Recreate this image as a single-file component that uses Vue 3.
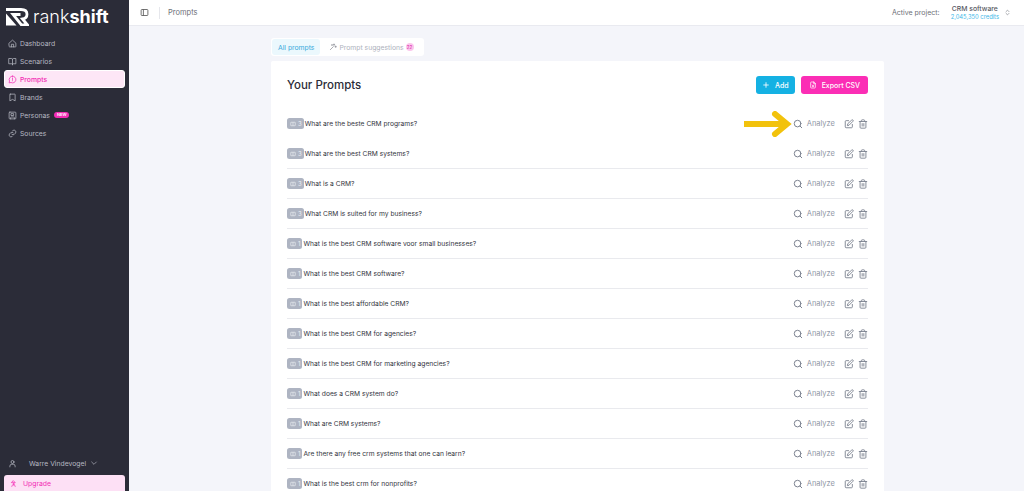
<template>
  <div class="app">
    <aside class="sidebar">
      <div class="logo">
        <svg class="logo__mark" width="24" height="18" viewBox="0 0 24 18">
          <path d="M1 1.500H16C20 1.500 22 3.500 22 6.200C22 8.800 20 10.600 17.500 11L22.500 17H16.500L8 6.500H15.500" fill="none" stroke="#fff" stroke-width="2.800" />
          <path d="M1 5.500L11.500 17.500H1Z" fill="#fff" />
        </svg>
        <span class="logo__text">rank<b>shift</b></span>
      </div>
      <nav class="nav">
        <a v-for="item in navItems" :key="item.label" class="nav__item" :class="{ 'nav__item--active': item.active }">
          <svg class="nav__icon" viewBox="0 0 24 24" fill="none" stroke="currentColor" stroke-width="2" stroke-linecap="round" stroke-linejoin="round">
            <path :d="item.icon" />
          </svg>
          <span>{{ item.label }}</span>
          <span v-if="item.badge" class="nav__badge">{{ item.badge }}</span>
        </a>
      </nav>
      <div class="sidebar__bottom">
        <div class="user">
          <svg class="user__icon" viewBox="0 0 24 24" fill="none" stroke="currentColor" stroke-width="2" stroke-linecap="round">
            <circle cx="12" cy="8" r="4" />
            <path d="M5 21v-2a5 5 0 0 1 5-5h4a5 5 0 0 1 5 5v2" />
          </svg>
          <span class="user__name">Warre Vindevogel</span>
          <svg class="user__chevron" viewBox="0 0 24 24" fill="none" stroke="currentColor" stroke-width="2" stroke-linecap="round">
            <path d="M5 9l7 7 7-7" />
          </svg>
        </div>
        <div class="upgrade">
          <svg class="upgrade__icon" viewBox="0 0 24 24" fill="none" stroke="currentColor" stroke-width="2.5" stroke-linecap="round" stroke-linejoin="round">
            <path d="M12 3l6 6H6z" />
            <circle cx="12" cy="14" r="2" />
            <path d="M6 22c0-4 3-5 6-5s6 1 6 5" />
          </svg>
          <span>Upgrade</span>
        </div>
      </div>
    </aside>

    <div class="page">
      <header class="topbar">
        <svg class="topbar__toggle" viewBox="0 0 24 24" fill="none" stroke="currentColor" stroke-width="2.2" stroke-linejoin="round">
          <rect x="3" y="4" width="18" height="16" rx="2" />
          <path d="M9 4v16" />
        </svg>
        <span class="topbar__sep"></span>
        <span class="topbar__title">Prompts</span>
        <div class="project">
          <span class="project__label">Active project:</span>
          <div class="project__info">
            <span class="project__name">CRM software</span>
            <span class="project__credits">2,045,350 credits</span>
          </div>
          <svg class="project__arrows" viewBox="0 0 24 24" fill="none" stroke="currentColor" stroke-width="2.5" stroke-linecap="round" stroke-linejoin="round">
            <path d="M7 9l5-5 5 5M7 15l5 5 5-5" />
          </svg>
        </div>
      </header>

      <main class="content">
        <div class="tabs">
          <span class="tab tab--active">All prompts</span>
          <span class="tab">
            <svg class="tab__icon" viewBox="0 0 24 24" fill="none" stroke="currentColor" stroke-width="2.2" stroke-linecap="round" stroke-linejoin="round">
              <path d="M4 20l9-9M15 3v4M13 5h4M20 9v4M18 11h4M9 5v2M8 6h2" />
            </svg>
            <span>Prompt suggestions</span>
            <span class="tab__count">22</span>
          </span>
        </div>

        <section class="card">
          <div class="card__head">
            <h1 class="card__title">Your Prompts</h1>
            <div class="card__actions">
              <button class="btn btn--blue">
                <svg class="btn__icon" viewBox="0 0 24 24" fill="none" stroke="currentColor" stroke-width="2.5" stroke-linecap="round">
                  <path d="M12 5v14M5 12h14" />
                </svg>
                Add
              </button>
              <button class="btn btn--pink">
                <svg class="btn__icon" viewBox="0 0 24 24" fill="none" stroke="currentColor" stroke-width="2.2" stroke-linecap="round" stroke-linejoin="round">
                  <path d="M14 3H7a2 2 0 0 0-2 2v14a2 2 0 0 0 2 2h10a2 2 0 0 0 2-2V8z" />
                  <path d="M14 3v5h5M10 12l4 5M14 12l-4 5" />
                </svg>
                Export CSV
              </button>
            </div>
          </div>

          <ul class="prompts">
            <li v-for="(prompt, i) in prompts" :key="i" class="prompt">
              <span class="prompt__tag">
                <svg class="prompt__tag-icon" viewBox="0 0 24 24" fill="none" stroke="currentColor" stroke-width="2.5">
                  <rect x="3" y="5" width="18" height="14" rx="1" />
                  <path d="M12 5v14" />
                </svg>
                {{ prompt.count }}
              </span>
              <span class="prompt__text">{{ prompt.text }}</span>
              <span class="prompt__analyze">
                <svg class="prompt__search" viewBox="0 0 24 24" fill="none" stroke="currentColor" stroke-width="2.4" stroke-linecap="round">
                  <circle cx="11" cy="11" r="8" />
                  <path d="M21 21l-4.300-4.300" />
                </svg>
                Analyze
              </span>
              <svg class="prompt__action" viewBox="0 0 24 24" fill="none" stroke="currentColor" stroke-width="2.2" stroke-linecap="round" stroke-linejoin="round">
                <path d="M11 4H5a2 2 0 0 0-2 2v13a2 2 0 0 0 2 2h13a2 2 0 0 0 2-2v-6" />
                <path d="M18.500 2.500a2.100 2.100 0 0 1 3 3L12 15l-4 1 1-4z" />
              </svg>
              <svg class="prompt__action" viewBox="0 0 24 24" fill="none" stroke="currentColor" stroke-width="2.2" stroke-linecap="round" stroke-linejoin="round">
                <path d="M3 6h18M8 6V4a2 2 0 0 1 2-2h4a2 2 0 0 1 2 2v2M19 6v14a2 2 0 0 1-2 2H7a2 2 0 0 1-2-2V6M10 11v6M14 11v6" />
              </svg>
              <svg v-if="i === 0" class="prompt__arrow" viewBox="0 0 48 26" fill="none" stroke="#f2c20c" stroke-width="6" stroke-linecap="round" stroke-linejoin="miter">
                <path d="M1 13H42M31 3l12 10-12 10" />
              </svg>
            </li>
          </ul>
        </section>
      </main>
    </div>
  </div>
</template>

<script setup>
const navItems = [
  { label: 'Dashboard', icon: 'M3 11l9-8 9 8v9a1 1 0 0 1-1 1H4a1 1 0 0 1-1-1zM9 21v-7h6v7' },
  { label: 'Scenarios', icon: 'M12 7v14M3 4h6a3 3 0 0 1 3 3 3 3 0 0 1 3-3h6v14h-7a2 2 0 0 0-2 2 2 2 0 0 0-2-2H3z' },
  { label: 'Prompts', active: true, icon: 'M12 3a9 9 0 1 1-4 17l-5 1 1-5A9 9 0 0 1 12 3zM12 8v4M12 15v.5' },
  { label: 'Brands', icon: 'M6 3h12a1 1 0 0 1 1 1v17l-7-4-7 4V4a1 1 0 0 1 1-1z' },
  { label: 'Personas', badge: 'NEW', icon: 'M5 3h14a2 2 0 0 1 2 2v14a2 2 0 0 1-2 2H5a2 2 0 0 1-2-2V5a2 2 0 0 1 2-2zM9 7h6v5H9zM7 21v-3a2 2 0 0 1 2-2h6a2 2 0 0 1 2 2v3' },
  { label: 'Sources', icon: 'M10 14a5 5 0 0 0 7 0l3-3a5 5 0 0 0-7-7l-1 1M14 10a5 5 0 0 0-7 0l-3 3a5 5 0 0 0 7 7l1-1' }
]

const prompts = [
  { count: 3, text: 'What are the beste CRM programs?' },
  { count: 3, text: 'What are the best CRM systems?' },
  { count: 3, text: 'What is a CRM?' },
  { count: 3, text: 'What CRM is suited for my business?' },
  { count: 1, text: 'What is the best CRM software voor small businesses?' },
  { count: 1, text: 'What is the best CRM software?' },
  { count: 1, text: 'What is the best affordable CRM?' },
  { count: 1, text: 'What is the best CRM for agencies?' },
  { count: 1, text: 'What is the best CRM for marketing agencies?' },
  { count: 1, text: 'What does a CRM system do?' },
  { count: 1, text: 'What are CRM systems?' },
  { count: 1, text: 'Are there any free crm systems that one can learn?' },
  { count: 1, text: 'What is the best crm for nonprofits?' }
]
</script>

<style>
html,
body {
  margin: 0;
  height: 100%;
  overflow: hidden;
  background: #f4f5fa;
}
</style>

<style scoped>
.app {
  display: flex;
  width: 1024px;
  height: 491px;
  overflow: hidden;
  font-family: Inter, "Noto Sans", sans-serif;
  color: #33343d;
}

/* sidebar */
.sidebar {
  width: 129px;
  flex-shrink: 0;
  display: flex;
  flex-direction: column;
  background: #2b2c38;
  color: #b6b8c2;
  box-sizing: border-box;
}

.logo {
  height: 34px;
  display: flex;
  align-items: center;
  gap: 4px;
  padding: 0 0 0 5px;
  color: #fff;
}

.logo__mark {
  flex-shrink: 0;
}

.logo__text {
  font-size: 18px;
  font-weight: 300;
  line-height: 1;
}

.logo__text b {
  font-weight: 700;
}

.nav {
  display: flex;
  flex-direction: column;
  padding: 0 4px;
}

.nav__item {
  height: 18px;
  display: flex;
  align-items: center;
  gap: 3px;
  padding: 0 4px;
  font-size: 6.8px;
  box-sizing: border-box;
}

.nav__item--active {
  background: #fde6f6;
  color: #f22cb4;
  border: 1px solid #fff;
  border-radius: 3px;
  font-weight: 500;
  padding: 0 3px;
}

.nav__icon {
  width: 9px;
  height: 9px;
  flex-shrink: 0;
}

.nav__badge {
  background: #f22cb4;
  color: #fff;
  font-size: 4px;
  font-weight: 600;
  padding: 1px 3px;
  border-radius: 4px;
  line-height: 4px;
  margin-left: 1px;
}

.sidebar__bottom {
  margin-top: auto;
}

.user {
  height: 20px;
  display: flex;
  align-items: center;
  padding: 0 0 0 8px;
  font-size: 6.8px;
  margin-bottom: 2px;
}

.user__icon {
  width: 9px;
  height: 9px;
  flex-shrink: 0;
}

.user__name {
  margin-left: 12px;
}

.user__chevron {
  width: 8px;
  height: 8px;
  margin-left: 4px;
}

.upgrade {
  height: 16px;
  margin: 0 4px;
  display: flex;
  align-items: center;
  gap: 6px;
  padding: 0 6px;
  background: #fde0f5;
  color: #f22cb4;
  border-radius: 3px 3px 0 0;
  font-size: 6.8px;
}

.upgrade__icon {
  width: 7px;
  height: 7px;
}

/* top bar */
.page {
  flex: 1;
  min-width: 0;
  display: flex;
  flex-direction: column;
  background: #f4f5fa;
}

.topbar {
  height: 25px;
  flex-shrink: 0;
  display: flex;
  align-items: center;
  padding: 0 13px 0 11px;
  background: #fff;
  border-bottom: 1px solid #e9eaf0;
}

.topbar__toggle {
  width: 9px;
  height: 9px;
  color: #555;
}

.topbar__sep {
  width: 1px;
  height: 12px;
  background: #e6e7ec;
  margin: 0 8px 0 10px;
}

.topbar__title {
  font-size: 7.5px;
  color: #6d6f78;
}

.project {
  margin-left: auto;
  display: flex;
  align-items: center;
}

.project__label {
  font-size: 7px;
  color: #6d6f78;
}

.project__info {
  display: flex;
  flex-direction: column;
  align-items: center;
  margin: 0 5px 0 11px;
}

.project__name {
  font-size: 6.8px;
  line-height: 9px;
  font-weight: 500;
  color: #555761;
}

.project__credits {
  font-size: 5.8px;
  line-height: 8px;
  color: #3db8e8;
}

.project__arrows {
  width: 7px;
  height: 7px;
  color: #8a8c94;
}

/* content */
.content {
  flex: 1;
  min-height: 0;
  padding: 12px 140px 0 142px;
}

.tabs {
  display: inline-flex;
  align-items: center;
  height: 18px;
  padding: 0 1px;
  background: #fff;
  border-radius: 3px;
  margin-bottom: 5px;
  vertical-align: top;
  font-size: 6.8px;
  color: #aeb2bd;
}

.tab {
  display: flex;
  align-items: center;
  height: 16px;
  padding: 0 9px;
  gap: 2px;
}

.tab--active {
  background: #ebf8fd;
  border-radius: 3px;
  color: #36a9dc;
  padding: 0 6px;
}

.tab__icon {
  width: 8px;
  height: 8px;
  color: #8a8c94;
}

.tab__count {
  width: 8px;
  height: 8px;
  border-radius: 50%;
  background: #fbc6ec;
  color: #d722a6;
  font-size: 4.5px;
  display: flex;
  align-items: center;
  justify-content: center;
}

.card {
  background: #fff;
  padding: 0 16px;
  height: 440px;
  border-radius: 2px 2px 0 0;
}

.card__head {
  height: 48px;
  display: flex;
  justify-content: space-between;
  align-items: center;
}

.card__title {
  margin: 0;
  font-size: 11.5px;
  font-weight: 500;
  color: #2b2c38;
}

.card__actions {
  display: flex;
  gap: 6px;
}

.btn {
  height: 18px;
  display: flex;
  align-items: center;
  gap: 5px;
  border: none;
  border-radius: 3px;
  color: #fff;
  font-family: inherit;
  font-size: 7px;
  font-weight: 500;
}

.btn--blue {
  background: #15b1e3;
  padding: 0 6px;
}

.btn--pink {
  background: #fb2eb5;
  padding: 0 8px;
}

.btn__icon {
  width: 8px;
  height: 8px;
}

.prompts {
  list-style: none;
  margin: 0;
  padding: 0;
}

.prompt {
  position: relative;
  height: 30px;
  display: flex;
  align-items: center;
  border-bottom: 1px solid #e9eaee;
  box-sizing: border-box;
  font-size: 6.7px;
  color: #33343d;
}

.prompt:first-child {
  border-bottom-color: transparent;
}

.prompt__tag {
  display: flex;
  align-items: center;
  gap: 2px;
  height: 11px;
  padding: 0 2px 0 3px;
  background: #aeb4c2;
  color: #eef0f4;
  border-radius: 2.5px;
  font-size: 6px;
  margin-right: 1px;
}

.prompt__tag-icon {
  width: 6px;
  height: 6px;
}

.prompt__text {
  flex: 1;
}

.prompt__analyze {
  display: flex;
  align-items: center;
  gap: 4px;
  color: #9197a6;
  font-size: 7.5px;
  margin-right: 9px;
}

.prompt__search {
  width: 10px;
  height: 10px;
  color: #7d8391;
}

.prompt__action {
  width: 10px;
  height: 10px;
  color: #7d8391;
}

.prompt__action + .prompt__action {
  margin-left: 4px;
}

.prompt__arrow {
  position: absolute;
  right: 76px;
  top: 2px;
  width: 48px;
  height: 26px;
}
</style>
